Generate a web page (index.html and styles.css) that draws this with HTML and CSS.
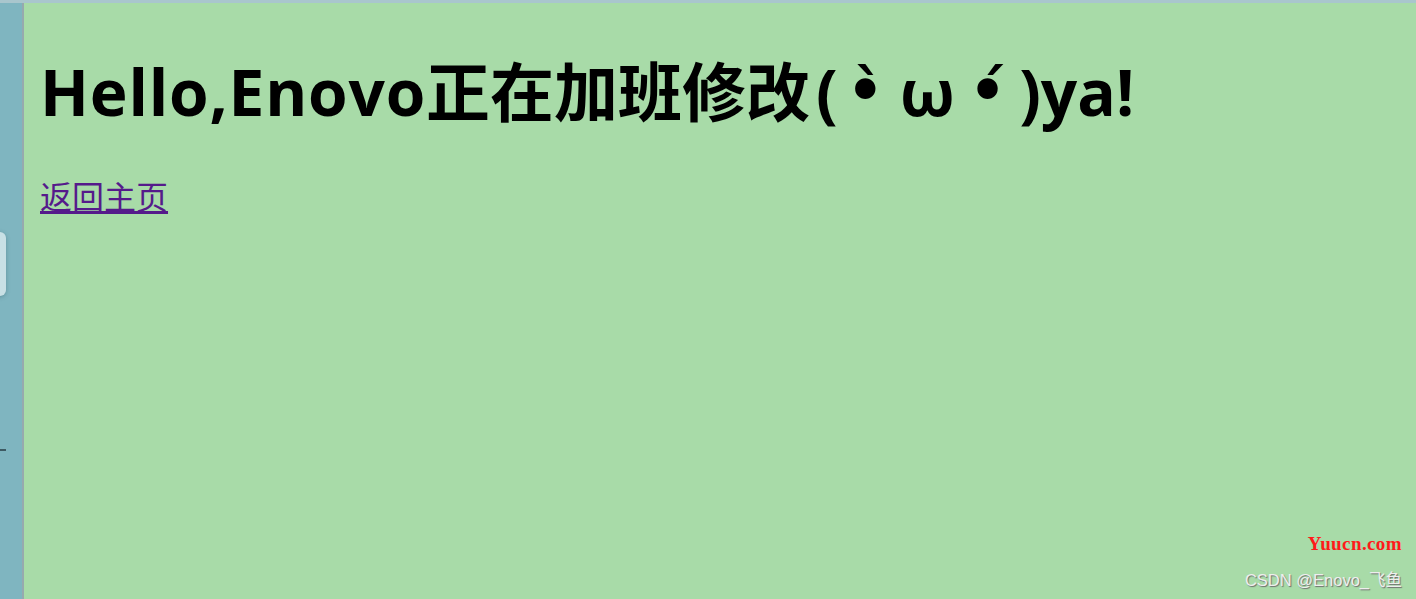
FILE: index.html
```html
<!DOCTYPE html>
<html lang="zh-CN">
<head>
<meta charset="utf-8">
<title>Enovo</title>
<link rel="stylesheet" href="styles.css">
</head>
<body>
<div class="topbar"></div>
<div class="frame">
  <aside class="side">
    <div class="side-tab"></div>
    <div class="side-tick"></div>
  </aside>
  <main class="page">
    <h1 class="title"><span class="latin">Hello,Enovo</span>正在加班修改<span class="kao">(<span class="eye eye-l">•̀</span>ω<span class="eye eye-r">•́</span>)</span>ya!</h1>
    <a class="back" href="#">返回主页</a>
    <div class="marks">
      <div class="mark-red">Yuucn.com</div>
      <div class="mark-csdn">CSDN @Enovo_飞鱼</div>
    </div>
  </main>
</div>
</body>
</html>
```
FILE: styles.css
```css
html, body {
  margin: 0;
  padding: 0;
  height: 100%;
  overflow: hidden;
}
body {
  background: #7fb5c0;
  display: flex;
  flex-direction: column;
}
.topbar {
  height: 3px;
  background: #a9c6cd;
  flex: none;
}
.frame {
  flex: 1;
  display: flex;
  min-height: 0;
}
.side {
  width: 22px;
  flex: none;
  background: #7fb5c0;
  border-right: 2px solid #97a9ae;
  position: relative;
}
.side-tab {
  position: absolute;
  left: -10px;
  top: 229px;
  width: 16px;
  height: 64px;
  background: #c8e0e5;
  border-radius: 6px;
  box-shadow: 0 1px 4px rgba(40, 80, 90, 0.35);
}
.side-tick {
  position: absolute;
  left: 0;
  top: 446px;
  width: 6px;
  height: 2px;
  background: #3d5a63;
}
.page {
  flex: 1;
  background: #a8dba8;
  padding: 0 16px;
  position: relative;
  font-family: "Open Sans", "Noto Sans CJK SC", sans-serif;
}
.title {
  margin: 49px 0 0 0;
  font-size: 64px;
  line-height: 80px;
  font-weight: 700;
  color: #000;
  white-space: nowrap;
}
.latin {
  letter-spacing: 0.8px;
}
.kao {
  margin-left: 6px;
}
.eye {
  font-family: "DejaVu Sans", sans-serif;
  font-weight: 700;
  font-size: 58px;
  display: inline-block;
  line-height: 1;
  vertical-align: 5px;
}
.eye-l {
  margin: 0 16px 0 9px;
}
.eye-r {
  margin: 0 13px 0 14px;
}
.back {
  display: inline-block;
  margin-top: 43px;
  font-family: "Noto Sans CJK SC", sans-serif;
  font-size: 32px;
  line-height: 40px;
  color: #551a8b;
  text-decoration: underline;
  text-underline-offset: 2px;
}
.marks {
  position: absolute;
  right: 14px;
  bottom: 8px;
  display: flex;
  flex-direction: column;
  align-items: flex-end;
  gap: 12px;
}
.mark-red {
  font-family: "Liberation Serif", "DejaVu Serif", serif;
  font-size: 19px;
  font-weight: 700;
  color: #ff1a1a;
  letter-spacing: 0.4px;
}
.mark-csdn {
  font-family: "Liberation Sans", "Noto Sans CJK SC", sans-serif;
  font-size: 16.5px;
  color: #eeeeee;
  text-shadow: 1px 1px 1px #6d6d6d;
}
```
